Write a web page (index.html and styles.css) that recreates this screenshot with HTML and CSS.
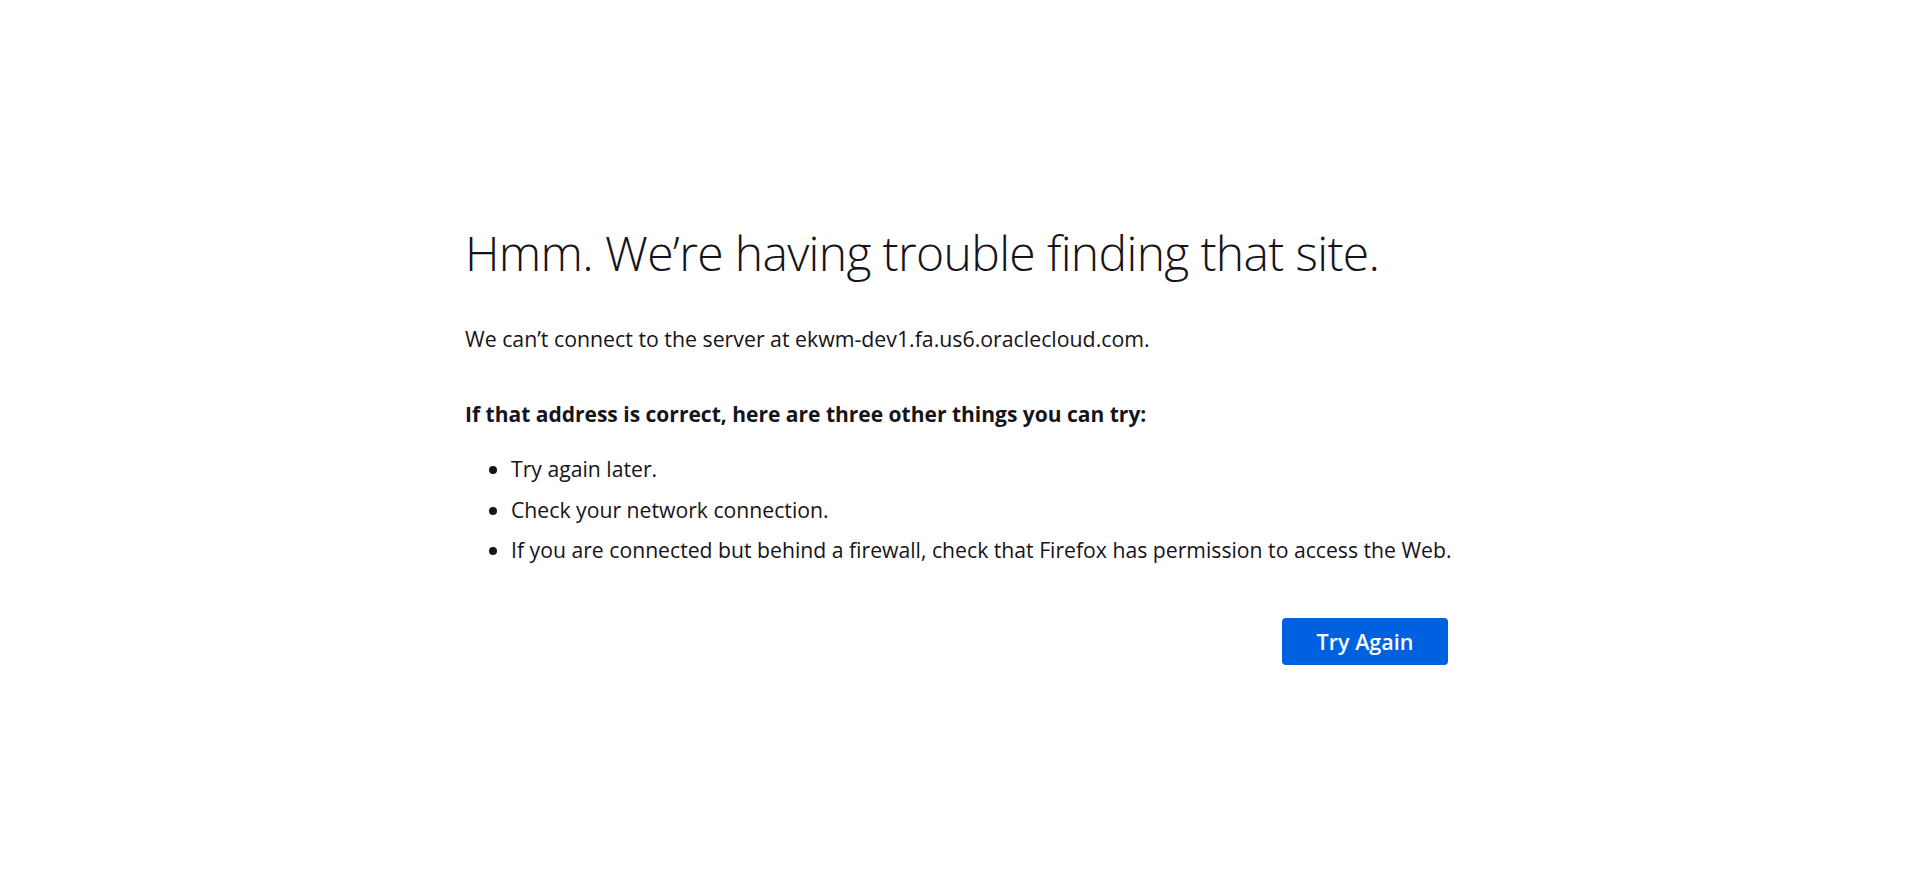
FILE: index.html
```html
<!DOCTYPE html>
<html lang="en">
<head>
<meta charset="utf-8">
<title>Server Not Found</title>
<link rel="stylesheet" href="styles.css">
</head>
<body>
<main class="page">
  <div class="container">
    <h1 class="title">Hmm. We’re having trouble finding that site.</h1>
    <p class="intro">We can’t connect to the server at ekwm-dev1.fa.us6.oraclecloud.com.</p>
    <p class="lead">If that address is correct, here are three other things you can try:</p>
    <ul class="tips">
      <li>Try again later.</li>
      <li>Check your network connection.</li>
      <li>If you are connected but behind a firewall, check that Firefox has permission to access the Web.</li>
    </ul>
    <div class="actions">
      <button class="primary" type="button">Try Again</button>
    </div>
  </div>
</main>
</body>
</html>
```

FILE: styles.css
```css
html, body {
  margin: 0;
  padding: 0;
  background: #ffffff;
}
body {
  font-family: "Open Sans", "Noto Sans", sans-serif;
  color: #15141a;
}
.page {
  display: flex;
  justify-content: center;
  padding-top: 222px;
}
.container {
  width: 990px;
}
.title {
  margin: 0;
  font-size: 48px;
  font-weight: 300;
  letter-spacing: -0.65px;
  line-height: 62px;
  white-space: nowrap;
}
.intro {
  margin: 40px 0 0;
  font-size: 21.3px;
  line-height: 30px;
}
.lead {
  margin: 45px 0 0;
  font-size: 21px;
  font-weight: 700;
  line-height: 30px;
}
.tips {
  margin: 25px 0 0;
  padding-left: 46px;
  font-size: 21.2px;
  line-height: 30px;
  white-space: nowrap;
}
.tips li {
  margin-bottom: 10.5px;
}
.tips li:last-child {
  margin-bottom: 0;
}
.actions {
  display: flex;
  justify-content: flex-end;
  padding-right: 7px;
  margin-top: 53px;
}
.primary {
  width: 166px;
  height: 47px;
  border: none;
  border-radius: 4px;
  background: #0061e0;
  color: #fbfbfe;
  font-family: "Open Sans", "Noto Sans", sans-serif;
  font-size: 21.5px;
  font-weight: 600;
  padding: 0;
  cursor: pointer;
}
```
